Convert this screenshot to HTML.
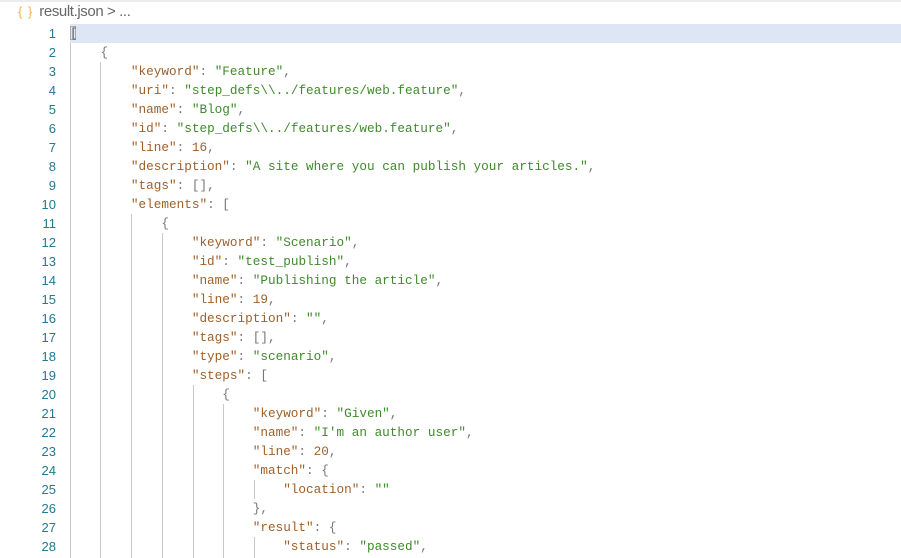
<!DOCTYPE html>
<html><head><meta charset="utf-8"><style>
body{margin:0;width:901px;height:558px;overflow:hidden;background:#fff;position:relative;font-family:"Liberation Mono",monospace;}
.top{position:absolute;left:0;top:0;width:901px;height:2px;background:#ececec}
.bc{position:absolute;left:18px;top:3px;font:15px "Liberation Sans",sans-serif;color:#666;letter-spacing:-0.4px}
.bc .i{color:#e8b84a;font-size:13px;margin-right:6px;letter-spacing:1px}
.hl{position:absolute;left:70px;top:24px;width:831px;height:19px;background:#dce6f4}
.ln{position:absolute;left:0;width:56px;text-align:right;font:13px "Liberation Sans",sans-serif;color:#237893;height:19px;line-height:19px}
.cd{position:absolute;left:70px;font-size:12.7px;height:19px;line-height:19px;white-space:pre;color:#777}
.k{color:#a0602a}.s{color:#3f8a2c}.n{color:#a0602a}
.g{position:absolute;width:1px;background:#c8c8c8}
</style></head><body>
<div class="top"></div>
<div class="bc"><span class="i">{ }</span>result.json &gt; ...</div>
<div class="hl"></div>
<div style="position:absolute;left:70px;top:26px;width:6px;height:14px;border:1px solid #aaa;box-sizing:border-box"></div>
<div class="g" style="left:70px;top:43px;height:515px"></div>
<div class="g" style="left:100px;top:62px;height:496px"></div>
<div class="g" style="left:131px;top:214px;height:344px"></div>
<div class="g" style="left:162px;top:233px;height:325px"></div>
<div class="g" style="left:193px;top:385px;height:173px"></div>
<div class="g" style="left:223px;top:404px;height:154px"></div>
<div class="g" style="left:254px;top:480px;height:19px"></div>
<div class="g" style="left:254px;top:537px;height:21px"></div>
<div id="c"></div>
<script>
var L=[
'<span style="color:#555">[</span>',
'    {',
'        <span class="k">"keyword"</span>: <span class="s">"Feature"</span>,',
'        <span class="k">"uri"</span>: <span class="s">"step_defs\\\\../features/web.feature"</span>,',
'        <span class="k">"name"</span>: <span class="s">"Blog"</span>,',
'        <span class="k">"id"</span>: <span class="s">"step_defs\\\\../features/web.feature"</span>,',
'        <span class="k">"line"</span>: <span class="n">16</span>,',
'        <span class="k">"description"</span>: <span class="s">"A site where you can publish your articles."</span>,',
'        <span class="k">"tags"</span>: [],',
'        <span class="k">"elements"</span>: [',
'            {',
'                <span class="k">"keyword"</span>: <span class="s">"Scenario"</span>,',
'                <span class="k">"id"</span>: <span class="s">"test_publish"</span>,',
'                <span class="k">"name"</span>: <span class="s">"Publishing the article"</span>,',
'                <span class="k">"line"</span>: <span class="n">19</span>,',
'                <span class="k">"description"</span>: <span class="s">""</span>,',
'                <span class="k">"tags"</span>: [],',
'                <span class="k">"type"</span>: <span class="s">"scenario"</span>,',
'                <span class="k">"steps"</span>: [',
'                    {',
'                        <span class="k">"keyword"</span>: <span class="s">"Given"</span>,',
'                        <span class="k">"name"</span>: <span class="s">"I\'m an author user"</span>,',
'                        <span class="k">"line"</span>: <span class="n">20</span>,',
'                        <span class="k">"match"</span>: {',
'                            <span class="k">"location"</span>: <span class="s">""</span>',
'                        },',
'                        <span class="k">"result"</span>: {',
'                            <span class="k">"status"</span>: <span class="s">"passed"</span>,'
];
var h='';
for(var i=0;i<L.length;i++){var t=24+i*19;
h+='<div class="ln" style="top:'+t+'px">'+(i+1)+'</div><div class="cd" style="top:'+t+'px">'+L[i]+'</div>';}
document.getElementById('c').innerHTML=h;
</script>
</body></html>
